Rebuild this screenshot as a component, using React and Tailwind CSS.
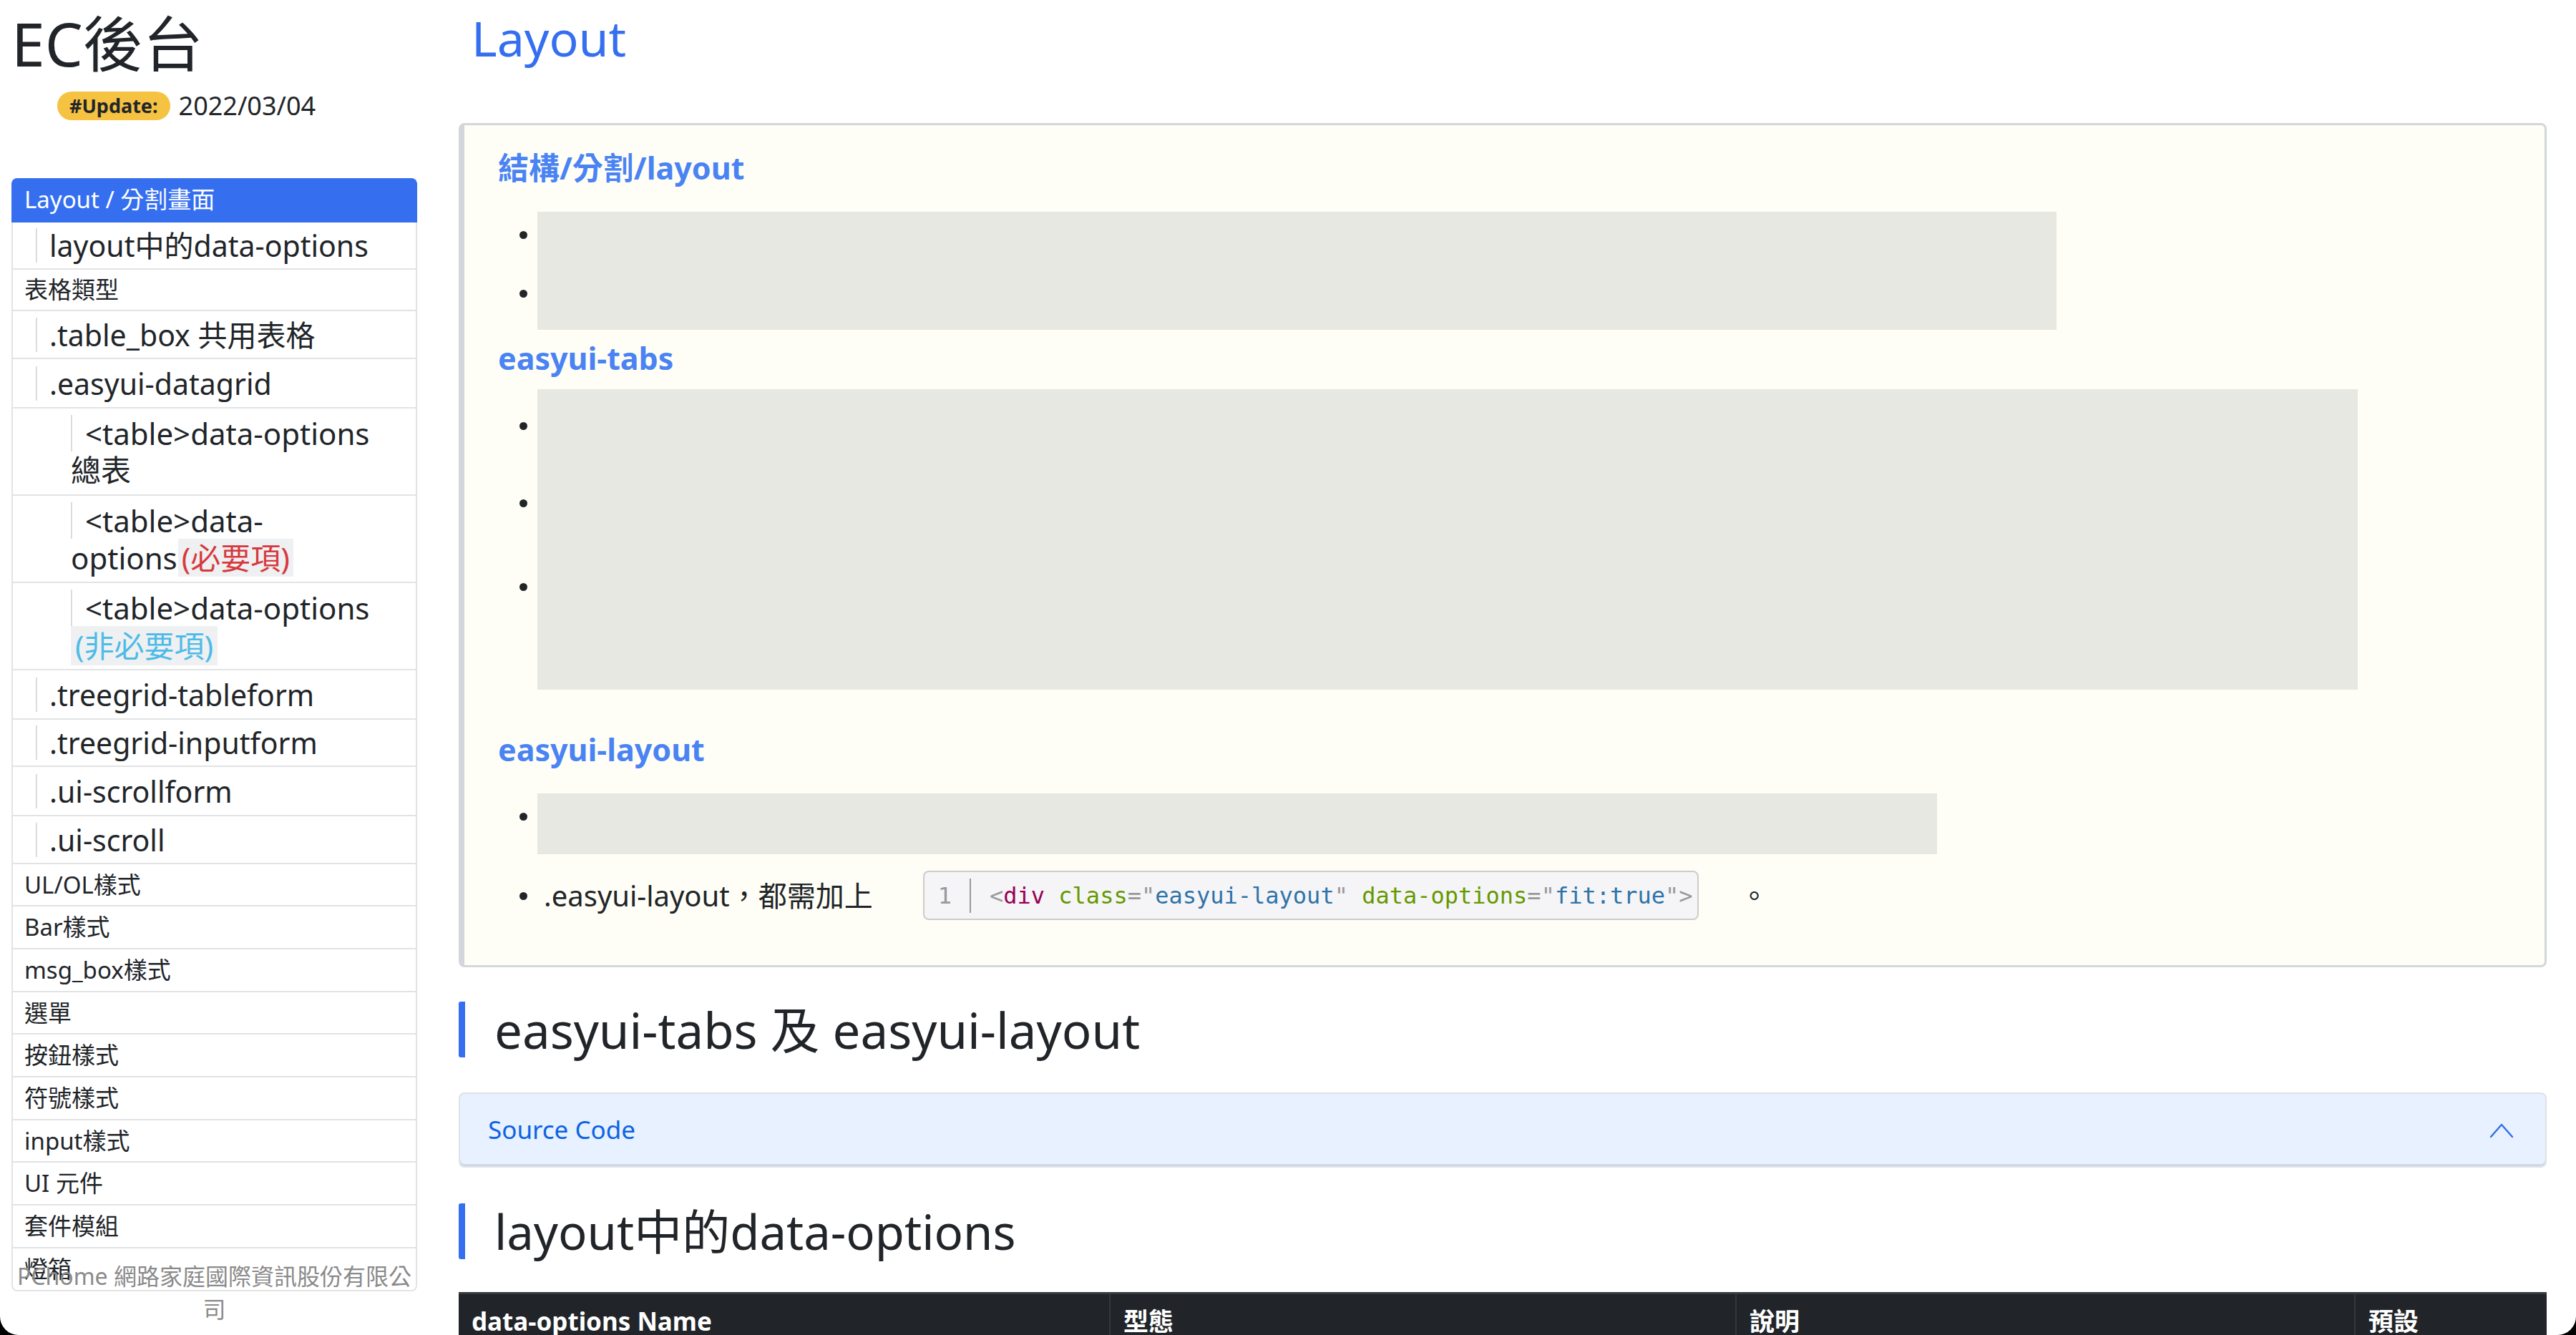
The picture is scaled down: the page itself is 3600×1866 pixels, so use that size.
import React from "react";

const FONT = { fontFamily: '"Noto Sans", "Noto Sans CJK TC", sans-serif' };
const MONO = { fontFamily: '"DejaVu Sans Mono", "Liberation Mono", monospace' };

function L1({ children, h = "h-[60px]", active = false, extra = "" }) {
  return (
    <div
      className={`flex items-center pl-[16px] border-x-2 border-b-2 text-[33px] leading-[40px] ${h} ${
        active ? "bg-[#356ff0] border-[#356ff0] text-white" : "border-[#e2e3e4] text-[#212529]"
      } ${extra}`}
    >
      {children}
    </div>
  );
}

function L2({ children, h = "h-[67px]" }) {
  return (
    <div className={`flex items-center pl-[32px] border-x-2 border-b-2 border-[#e2e3e4] text-[41px] text-[#212529] ${h}`}>
      <div className="border-l-2 border-[#dcdcdc] pl-[17px] leading-[48px]">{children}</div>
    </div>
  );
}

function L3({ first, second }) {
  return (
    <div className="h-[122px] pt-[9px] pl-[81px] border-x-2 border-b-2 border-[#e2e3e4] text-[42px] leading-[51px] text-[#212529] whitespace-nowrap">
      <div className="border-l-2 border-[#dcdcdc] pl-[18px] h-[51px] w-fit">{first}</div>
      <div>{second}</div>
    </div>
  );
}

function Bullet({ className = "" }) {
  return <div className={`w-[11px] h-[11px] rounded-full bg-[#212529] shrink-0 ${className}`} />;
}

function GrayItem({ h, w, bulletTop }) {
  return (
    <div className={`flex ${h}`}>
      <div className={`w-[102px] shrink-0 flex justify-end pr-[14px] ${bulletTop}`}>
        <Bullet />
      </div>
      <div className={`bg-[#e8e8e3] h-full ${w}`} />
    </div>
  );
}

function H5({ children, className = "" }) {
  return (
    <div className={`pl-[47px] text-[43px] leading-[56px] font-bold text-[#4a83f3] ${className}`}>{children}</div>
  );
}

function H2({ children, className = "", size = "text-[69px]" }) {
  return (
    <div className={`flex items-center h-[78px] border-l-[9px] border-[#356ff0] rounded-[3px] pl-[41px] ${className}`}>
      <span className={`${size} leading-[78px] text-[#212529]`}>{children}</span>
    </div>
  );
}

export default function App() {
  return (
    <div className="w-[3600px] h-[1866px] bg-black overflow-hidden">
      <div className="relative w-full h-full bg-white rounded-b-[26px] overflow-hidden flex" style={FONT}>
        {/* Sidebar */}
        <aside className="relative w-[567px] ml-[16px] shrink-0">
          <h1 className="pt-[12px] text-[84px] leading-[98px] text-[#212529]">EC後台</h1>
          <div className="mt-[18px] ml-[64px] flex items-center h-[40px]">
            <span className="h-[40px] px-[17px] rounded-full bg-[#f5c242] text-[#212529] text-[27px] font-bold leading-[40px]">
              #Update:
            </span>
            <span className="ml-[12px] text-[36px] text-[#212529]">2022/03/04</span>
          </div>
          <nav className="mt-[81px]">
            <L1 active h="h-[62px]" extra="rounded-t-[8px]">Layout / 分割畫面</L1>
            <L2 h="h-[66px]">layout中的data-options</L2>
            <L1 h="h-[58px]">表格類型</L1>
            <L2 h="h-[67px]">.table_box 共用表格</L2>
            <L2 h="h-[69px]">.easyui-datagrid</L2>
            <L3 first="<table>data-options" second="總表" />
            <L3
              first="<table>data-"
              second={
                <>
                  options
                  <span className="inline-block ml-[1px] bg-[#eff0f1] text-[#d63a3f] px-[5px] leading-[53px]">(必要項)</span>
                </>
              }
            />
            <L3
              first="<table>data-options"
              second={
                <span className="inline-block bg-[#eff0f1] text-[#4dbbe8] px-[6px] leading-[55px]">(非必要項)</span>
              }
            />
            <L2 h="h-[69px]">.treegrid-tableform</L2>
            <L2 h="h-[66px]">.treegrid-inputform</L2>
            <L2 h="h-[69px]">.ui-scrollform</L2>
            <L2 h="h-[67px]">.ui-scroll</L2>
            <L1 h="h-[59px]">UL/OL樣式</L1>
            <L1 h="h-[60px]">Bar樣式</L1>
            <L1 h="h-[60px]">msg_box樣式</L1>
            <L1 h="h-[59px]">選單</L1>
            <L1 h="h-[60px]">按鈕樣式</L1>
            <L1 h="h-[60px]">符號樣式</L1>
            <L1 h="h-[59px]">input樣式</L1>
            <L1 h="h-[60px]">UI 元件</L1>
            <L1 h="h-[60px]">套件模組</L1>
            <L1 h="h-[60px]" extra="rounded-b-[8px]">燈箱</L1>
          </nav>
          <div className="absolute left-0 top-[1761px] w-full text-center text-[32px] leading-[46px] text-[#8a8a8a]">
            PChome 網路家庭國際資訊股份有限公司
          </div>
        </aside>

        {/* Main */}
        <main className="ml-[58px] w-[2918px] shrink-0">
          <div className="pt-[10px] pl-[18px] text-[68px] leading-[86px] text-[#356ff0]">Layout</div>

          <section className="mt-[76px] bg-[#fefef6] border-[3px] border-l-[8px] border-[#d3d7db] rounded-[8px] pt-[32px] pb-[63px]">
            <H5>結構/分割/layout</H5>
            <div className="mt-[33px]">
              <GrayItem h="h-[82px]" w="w-[2123px]" bulletTop="pt-[27px]" />
              <GrayItem h="h-[83px]" w="w-[2123px]" bulletTop="pt-[27px]" />
            </div>
            <H5 className="mt-[12px]">easyui-tabs</H5>
            <div className="mt-[15px]">
              <GrayItem h="h-[108px]" w="w-[2544px]" bulletTop="pt-[46px]" />
              <GrayItem h="h-[117px]" w="w-[2544px]" bulletTop="pt-[46px]" />
              <GrayItem h="h-[195px]" w="w-[2544px]" bulletTop="pt-[46px]" />
            </div>
            <H5 className="mt-[56px]">easyui-layout</H5>
            <div className="mt-[33px]">
              <GrayItem h="h-[85px]" w="w-[1956px]" bulletTop="pt-[27px]" />
              <div className="mt-[23px] flex items-center h-[69px]">
                <div className="w-[102px] shrink-0 flex justify-end pr-[14px]">
                  <Bullet className="mt-[2px]" />
                </div>
                <span className="ml-[9px] text-[40px] text-[#212529]">.easyui-layout，都需加上</span>
                <div className="ml-[70px] h-[69px] flex items-center border-2 border-[#cccccc] rounded-[8px] bg-[#f5f5f7] pl-[19px] pr-[6px]">
                  <span className="text-[32px] text-[#999999]" style={MONO}>
                    1
                  </span>
                  <div className="ml-[25px] w-[2px] h-[48px] bg-[#999999]" />
                  <code className="ml-[26px] text-[32px] leading-[48px] whitespace-pre" style={MONO}>
                    <span className="text-[#999999]">&lt;</span>
                    <span className="text-[#990055]">div</span>
                    <span> </span>
                    <span className="text-[#669900]">class</span>
                    <span className="text-[#999999]">="</span>
                    <span className="text-[#2f73a8]">easyui-layout</span>
                    <span className="text-[#999999]">"</span>
                    <span> </span>
                    <span className="text-[#669900]">data-options</span>
                    <span className="text-[#999999]">="</span>
                    <span className="text-[#2f73a8]">fit:true</span>
                    <span className="text-[#999999]">"&gt;</span>
                  </code>
                </div>
                <span className="ml-[58px] text-[40px] text-[#212529]">。</span>
              </div>
            </div>
          </section>

          <H2 className="mt-[48px]">easyui-tabs 及 easyui-layout</H2>

          <div className="mt-[49px] h-[105px] flex items-center justify-between bg-[#e7f1ff] border-2 border-[#dfe2e6] rounded-[8px] shadow-[inset_0_-3px_0_rgba(0,0,0,0.1)] pl-[39px] pr-[44px]">
            <span className="text-[35px] text-[#0c63e4]">Source Code</span>
            <svg width="34" height="22" viewBox="0 0 34 22" fill="none">
              <path d="M2 20 L17 3 L32 20" stroke="#2f6ee8" strokeWidth="2.4" strokeLinecap="round" strokeLinejoin="round" />
            </svg>
          </div>

          <H2 className="mt-[50px]" size="text-[67px]">layout中的data-options</H2>

          <div className="mt-[46px] bg-[#212529] border-t-[3px] border-[#373b3e] flex text-white font-bold text-[35px] leading-[44px]">
            <div className="w-[911px] pl-[18px] pt-[16px] pb-[16px] border-r-2 border-[#32383e]">data-options Name</div>
            <div className="w-[875px] pl-[18px] pt-[16px] pb-[16px] border-r-2 border-[#32383e]">型態</div>
            <div className="w-[865px] pl-[18px] pt-[16px] pb-[16px] border-r-2 border-[#32383e]">說明</div>
            <div className="flex-1 pl-[18px] pt-[16px] pb-[16px]">預設</div>
          </div>
        </main>
      </div>
    </div>
  );
}
